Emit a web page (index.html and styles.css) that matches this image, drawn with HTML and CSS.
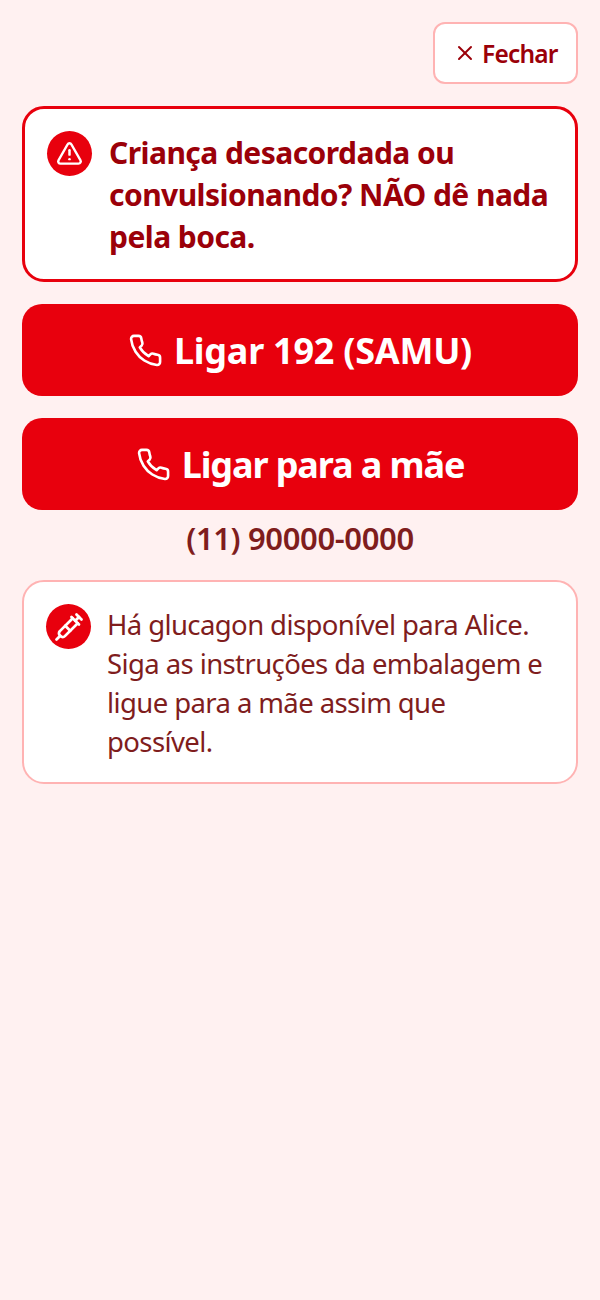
FILE: index.html
```html
<!DOCTYPE html>
<html lang="pt-BR">
<head>
  <meta charset="UTF-8">
  <meta name="viewport" content="width=device-width, initial-scale=1.0">
  <title>Emergência</title>
  <link rel="stylesheet" href="styles.css">
</head>
<body>

  <div class="page">
    <div class="top">
      <button class="close" type="button">
        <svg class="close-icon" viewBox="0 0 24 24"><path d="M18 6 6 18"/><path d="m6 6 12 12"/></svg>
        Fechar
      </button>
    </div>

    <div class="alert">
      <span class="badge">
        <svg viewBox="0 0 24 24"><path d="m21.73 18-8-14a2 2 0 0 0-3.48 0l-8 14A2 2 0 0 0 4 21h16a2 2 0 0 0 1.73-3"/><path d="M12 9v4"/><path d="M12 17h.01"/></svg>
      </span>
      <p class="alert-text">Criança desacordada ou convulsionando? NÃO dê nada pela boca.</p>
    </div>

    <a class="call call-samu" href="#">
      <svg class="call-icon" viewBox="0 0 24 24"><path d="M22 16.92v3a2 2 0 0 1-2.18 2 19.79 19.79 0 0 1-8.63-3.07 19.5 19.5 0 0 1-6-6 19.79 19.79 0 0 1-3.07-8.67A2 2 0 0 1 4.11 2h3a2 2 0 0 1 2 1.72 12.84 12.84 0 0 0 .7 2.81 2 2 0 0 1-.45 2.11L8.09 9.91a16 16 0 0 0 6 6l1.27-1.27a2 2 0 0 1 2.11-.45 12.84 12.84 0 0 0 2.81.7A2 2 0 0 1 22 16.92z"/></svg>
      Ligar 192 (SAMU)
    </a>

    <div class="contact">
      <a class="call" href="#">
        <svg class="call-icon" viewBox="0 0 24 24"><path d="M22 16.92v3a2 2 0 0 1-2.18 2 19.79 19.79 0 0 1-8.63-3.07 19.5 19.5 0 0 1-6-6 19.79 19.79 0 0 1-3.07-8.67A2 2 0 0 1 4.11 2h3a2 2 0 0 1 2 1.72 12.84 12.84 0 0 0 .7 2.81 2 2 0 0 1-.45 2.11L8.09 9.91a16 16 0 0 0 6 6l1.27-1.27a2 2 0 0 1 2.11-.45 12.84 12.84 0 0 0 2.81.7A2 2 0 0 1 22 16.92z"/></svg>
        Ligar para a mãe
      </a>
      <p class="phone">(11) 90000-0000</p>
    </div>

    <div class="info">
      <span class="badge">
        <svg class="syringe" viewBox="0 0 24 24"><path d="m18 2 4 4"/><path d="m17 7 3-3"/><path d="M19 9 8.7 19.3c-1 1-2.5 1-3.4 0l-.6-.6c-1-1-1-2.5 0-3.4L15 5"/><path d="m9 11 4 4"/><path d="m5 19-3 3"/><path d="m14 4 6 6"/></svg>
      </span>
      <p class="info-text">Há glucagon disponível para Alice. Siga as instruções da embalagem e ligue para a mãe assim que possível.</p>
    </div>
  </div>

</body>
</html>
```

FILE: styles.css
```css
body {
  background-color: #fff1f1;
  font-family: "Noto Sans", "Open Sans", sans-serif;
  margin: 0;
}

p {
  margin: 0;
}

svg {
  fill: none;
  stroke: currentColor;
  stroke-linecap: round;
  stroke-linejoin: round;
  stroke-width: 2;
}

.page {
  display: flex;
  flex-direction: column;
  gap: 22px;
  padding: 22px;
}

.top {
  display: flex;
  justify-content: flex-end;
}

.close {
  display: flex;
  align-items: center;
  gap: 5px;
  height: 62px;
  width: 145px;
  box-sizing: border-box;
  padding: 0 18px;
  background-color: #fff;
  border: 2px solid #ffb3b3;
  border-radius: 12px;
  color: #9b0009;
  font-family: inherit;
  font-size: 24.5px;
  font-weight: 600;
  letter-spacing: -0.8px;
}

.close-icon {
  width: 24px;
  height: 24px;
  flex-shrink: 0;
}

.alert {
  display: flex;
  align-items: flex-start;
  gap: 17px;
  padding: 22px 22px 21px;
  background-color: #fff;
  border: 3px solid #e8000d;
  border-radius: 22px;
}

.badge {
  display: flex;
  align-items: center;
  justify-content: center;
  width: 45px;
  height: 45px;
  flex-shrink: 0;
  background-color: #e8000d;
  border-radius: 50%;
  color: #fff;
}

.badge svg {
  width: 27px;
  height: 27px;
  stroke-width: 2.2;
}

.badge .syringe {
  width: 30px;
  height: 30px;
}

.alert-text {
  margin-top: 1px;
  color: #9b0009;
  font-size: 30px;
  font-weight: 700;
  line-height: 42px;
  letter-spacing: -0.55px;
}

.call {
  display: flex;
  align-items: center;
  justify-content: center;
  gap: 11px;
  height: 92px;
  background-color: #e8000d;
  border-radius: 20px;
  color: #fff;
  font-size: 36px;
  font-weight: 700;
  letter-spacing: -1.1px;
  text-decoration: none;
}

.call-samu {
  letter-spacing: -0.25px;
}

.call-icon {
  width: 35px;
  height: 35px;
  flex-shrink: 0;
  stroke-width: 1.8;
}

.contact {
  display: flex;
  flex-direction: column;
  gap: 8px;
}

.phone {
  color: #7f1d1d;
  font-size: 31px;
  font-weight: 600;
  line-height: 40px;
  letter-spacing: -0.37px;
  text-align: center;
}

.info {
  display: flex;
  align-items: flex-start;
  gap: 16px;
  padding: 22px 22px 21px;
  background-color: #fff;
  border: 2px solid #ffb3b3;
  border-radius: 22px;
}

.info-text {
  margin-top: 1px;
  color: #7f1d1d;
  font-size: 27.5px;
  line-height: 39px;
  letter-spacing: -0.6px;
}
```
